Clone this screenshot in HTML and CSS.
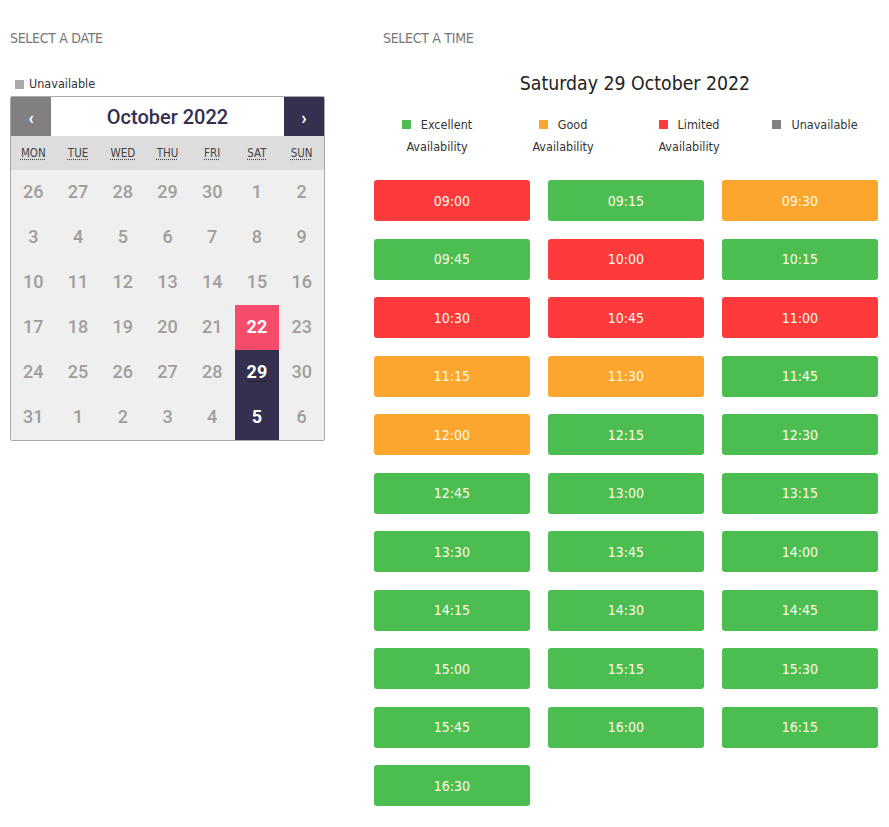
FILE: index.html
```html
<!DOCTYPE html>
<html>
<head>
<meta charset="utf-8">
<link rel="stylesheet" href="styles.css">
</head>
<body>
<div class="page">
  <div class="col-date">
    <div class="section-title">SELECT A DATE</div>
    <div class="cal-legend"><span class="sq sq-grey"></span>Unavailable</div>
    <div class="calendar">
      <div class="cal-head">
        <div class="nav prev">&#8249;</div>
        <div class="month">October 2022</div>
        <div class="nav next">&#8250;</div>
      </div>
      <div class="weekdays">
        <abbr>MON</abbr><abbr>TUE</abbr><abbr>WED</abbr><abbr>THU</abbr><abbr>FRI</abbr><abbr>SAT</abbr><abbr>SUN</abbr>
      </div>
      <div class="days">
        <span>26</span><span>27</span><span>28</span><span>29</span><span>30</span><span>1</span><span>2</span>
        <span>3</span><span>4</span><span>5</span><span>6</span><span>7</span><span>8</span><span>9</span>
        <span>10</span><span>11</span><span>12</span><span>13</span><span>14</span><span>15</span><span>16</span>
        <span>17</span><span>18</span><span>19</span><span>20</span><span>21</span><span class="d-sel">22</span><span>23</span>
        <span>24</span><span>25</span><span>26</span><span>27</span><span>28</span><span class="d-dark d-today">29</span><span>30</span>
        <span>31</span><span>1</span><span>2</span><span>3</span><span>4</span><span class="d-dark">5</span><span>6</span>
      </div>
    </div>
  </div>
  <div class="col-time">
    <div class="section-title time-title">SELECT A TIME</div>
    <div class="date-title">Saturday 29 October 2022</div>
    <div class="legend">
      <div class="legend-item"><span class="sq sq-green"></span>Excellent Availability</div>
      <div class="legend-item"><span class="sq sq-orange"></span>Good Availability</div>
      <div class="legend-item"><span class="sq sq-red"></span>Limited Availability</div>
      <div class="legend-item"><span class="sq sq-dgrey"></span>Unavailable</div>
    </div>
    <div class="slots">
      <div class="slot red">09:00</div>
      <div class="slot green">09:15</div>
      <div class="slot orange">09:30</div>
      <div class="slot green">09:45</div>
      <div class="slot red">10:00</div>
      <div class="slot green">10:15</div>
      <div class="slot red">10:30</div>
      <div class="slot red">10:45</div>
      <div class="slot red">11:00</div>
      <div class="slot orange">11:15</div>
      <div class="slot orange">11:30</div>
      <div class="slot green">11:45</div>
      <div class="slot orange">12:00</div>
      <div class="slot green">12:15</div>
      <div class="slot green">12:30</div>
      <div class="slot green">12:45</div>
      <div class="slot green">13:00</div>
      <div class="slot green">13:15</div>
      <div class="slot green">13:30</div>
      <div class="slot green">13:45</div>
      <div class="slot green">14:00</div>
      <div class="slot green">14:15</div>
      <div class="slot green">14:30</div>
      <div class="slot green">14:45</div>
      <div class="slot green">15:00</div>
      <div class="slot green">15:15</div>
      <div class="slot green">15:30</div>
      <div class="slot green">15:45</div>
      <div class="slot green">16:00</div>
      <div class="slot green">16:15</div>
      <div class="slot green">16:30</div>
    </div>
  </div>
</div>
</body>
</html>
```
FILE: styles.css
```css
html, body {
  margin: 0;
  padding: 0;
  background: #ffffff;
}
body {
  font-family: "DejaVu Sans Condensed", "DejaVu Sans", sans-serif;
  color: #333;
}
.page {
  display: flex;
  padding: 0 10px 0 10px;
  gap: 49px;
}
.col-date {
  width: 315px;
  flex: none;
}
.col-time {
  width: 504px;
  flex: none;
}
.section-title {
  font-size: 14px;
  color: #777;
  line-height: 18px;
  margin-top: 29px;
  letter-spacing: -0.3px;
}
.time-title {
  margin-left: 9px;
}
.cal-legend {
  margin-top: 29px;
  font-size: 12.5px;
  color: #333;
  line-height: 16px;
  height: 16px;
  display: flex;
  align-items: center;
  padding-left: 5px;
}
.sq {
  display: inline-block;
  width: 9px;
  height: 9px;
  margin-right: 5px;
  flex: none;
}
.sq-grey { background: #aaaaaa; }
.sq-green { background: #4cbe51; }
.sq-orange { background: #fda62f; }
.sq-red { background: #fe3a3d; }
.sq-dgrey { background: #808080; }

.calendar {
  margin-top: 4px;
  border: 1px solid #a9a9a9;
  border-radius: 2px;
  overflow: hidden;
  width: 313px;
  font-family: Roboto, "Liberation Sans", sans-serif;
}
.cal-head {
  display: flex;
  height: 39px;
  background: #fff;
}
.nav {
  width: 40px;
  display: flex;
  align-items: center;
  justify-content: center;
  color: #fff;
  font-size: 18px;
  font-weight: 700;
  padding-top: 2px;
  box-sizing: border-box;
}
.prev { background: #808080; }
.next { background: #352f50; }
.month {
  flex: 1;
  display: flex;
  align-items: center;
  justify-content: center;
  font-size: 20px;
  font-weight: 500;
  color: #352f50;
}
.weekdays {
  display: grid;
  grid-template-columns: repeat(7, 1fr);
  background: #dddddd;
  height: 34px;
  align-items: center;
  font-family: "DejaVu Sans Condensed", "DejaVu Sans", sans-serif;
  font-size: 11.5px;
  color: #444;
}
.weekdays abbr {
  text-align: center;
  text-decoration: underline dotted;
  text-underline-offset: 2px;
}
.days {
  display: grid;
  grid-template-columns: repeat(7, 1fr);
  grid-auto-rows: 45px;
  background: #efefef;
}
.days span {
  display: flex;
  align-items: center;
  justify-content: center;
  font-size: 18px;
  font-weight: 500;
  color: #a09e9c;
  padding-bottom: 2px;
}
.days .d-sel {
  background: #f74b6b;
  color: #fff;
  font-weight: 700;
}
.days .d-dark {
  background: #352f50;
  color: #fff;
  font-weight: 700;
}
.days .d-today {
  text-decoration: underline;
  text-decoration-color: #222;
  text-underline-offset: 3px;
}

.date-title {
  margin-top: 24px;
  padding-left: 18px;
  text-align: center;
  font-size: 19.3px;
  color: #222;
  line-height: 26px;
}
.legend {
  display: grid;
  grid-template-columns: repeat(4, 1fr);
  margin-top: 17px;
  font-size: 12.5px;
  line-height: 22px;
  color: #333;
}
.legend-item {
  text-align: center;
  padding: 0 10px;
}
.legend-item .sq {
  margin-right: 10px;
}
.slots {
  margin-top: 22px;
  display: grid;
  grid-template-columns: repeat(3, 1fr);
  column-gap: 18px;
  row-gap: 17.5px;
}
.slot {
  height: 41px;
  border-radius: 3px;
  display: flex;
  align-items: center;
  justify-content: center;
  color: #fffbe8;
  font-size: 14px;
}
.slot.red { background: #fe3a3d; }
.slot.green { background: #4cbe51; }
.slot.orange { background: #fda62f; }
```
